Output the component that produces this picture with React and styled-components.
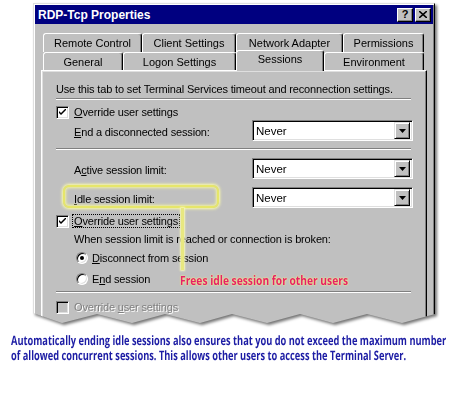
import React from 'react';
import styled, { createGlobalStyle } from 'styled-components';

const GlobalStyle = createGlobalStyle`
  body {
    margin: 0;
    background: #fff;
  }
`;

const Page = styled.div`
  position: relative;
  width: 470px;
  height: 400px;
  padding: 3px 0 0 33px;
  box-sizing: border-box;
  overflow: hidden;
  font-family: "Liberation Sans", Arial, sans-serif;
`;

// drop shadow sits on a wrapper so the clipped torn edge still casts it
const Shadow = styled.div`
  width: 402px;
  filter: drop-shadow(2px 2px 1.5px rgba(0, 0, 0, 0.55));
`;

const Dialog = styled.div`
  height: 322px;
  box-sizing: border-box;
  background: #c0c0c0;
  border: 1px solid;
  border-color: #dfdfdf #000 #000 #dfdfdf;
  box-shadow: inset 1px 1px #fff, inset -1px -1px #808080;
  padding: 1px;
  overflow: hidden;
  clip-path: polygon(
    0 0, 402px 0, 402px 311px,
    369px 320px, 334px 311px, 300px 320px, 267px 311px,
    234px 320px, 199px 311px, 167px 320px, 132px 311px,
    99px 320px, 64px 311px, 29px 320px, 0 310px
  );
`;

const TitleBar = styled.div`
  height: 19px;
  background: #000080;
  display: flex;
  align-items: center;
  justify-content: space-between;
  padding: 0 2px 0 3px;
`;

const Title = styled.span`
  color: #fff;
  font-weight: bold;
  font-size: 12px;
`;

const TitleButtons = styled.div`
  display: flex;
  gap: 2px;
`;

const TitleButton = styled.div`
  width: 16px;
  height: 14px;
  box-sizing: border-box;
  background: #c0c0c0;
  border: 1px solid;
  border-color: #fff #000 #000 #fff;
  box-shadow: inset -1px -1px #808080;
  display: flex;
  align-items: center;
  justify-content: center;
  font-weight: bold;
  font-size: 11px;
  line-height: 1;
  color: #000;
`;

const Body = styled.div`
  padding: 9px 6px 0 6px;
`;

const TabRow = styled.div`
  display: flex;
  align-items: flex-end;
  height: ${p => p.$h}px;
  margin: 0 3px 0 2px;
`;

const Tab = styled.div`
  position: relative;
  z-index: ${p => (p.$selected ? 2 : 1)};
  width: ${p => p.$w}px;
  height: ${p => (p.$selected ? p.$h + 3 : p.$h)}px;
  margin: ${p => (p.$selected ? '-2px 0 -1px 0' : '0')};
  box-sizing: border-box;
  background: #c0c0c0;
  border: 1px solid;
  border-bottom: none;
  border-color: #fff #000 transparent #fff;
  box-shadow: inset -1px 0 #808080;
  border-radius: 3px 3px 0 0;
  display: flex;
  align-items: ${p => (p.$selected ? 'flex-start' : 'center')};
  padding-top: ${p => (p.$selected ? '2px' : '0')};
  justify-content: center;
  font-size: 11px;
  color: #000;
`;

const Panel = styled.div`
  position: relative;
  height: 260px;
  box-sizing: border-box;
  border: 1px solid;
  border-color: #fff #000 #000 #fff;
  box-shadow: inset -1px -1px #808080, inset 1px 1px #dfdfdf;
  padding: 11px 15px 0 14px;
  display: flex;
  flex-direction: column;
  font-size: 11px;
  letter-spacing: -0.16px;
  color: #000;
`;

const Text = styled.div`
  height: 14px;
  line-height: 14px;
  margin-top: ${p => p.$mt || 0}px;
  padding-left: ${p => p.$indent || 0}px;
  white-space: nowrap;
`;

const Separator = styled.div`
  height: 0;
  margin-top: ${p => p.$mt || 0}px;
  border-top: 1px solid #808080;
  border-bottom: 1px solid #fff;
`;

const CheckRow = styled.label`
  display: flex;
  align-items: center;
  gap: 5px;
  height: 14px;
  margin-top: ${p => p.$mt || 0}px;
  white-space: nowrap;
  color: ${p => (p.$disabled ? '#808080' : '#000')};
  text-shadow: ${p => (p.$disabled ? '1px 1px #fff' : 'none')};
`;

const Box = styled.span`
  width: 13px;
  height: 13px;
  box-sizing: border-box;
  background: ${p => (p.$disabled ? '#c0c0c0' : '#fff')};
  border: 1px solid;
  border-color: #808080 #fff #fff #808080;
  box-shadow: inset 1px 1px #000, inset -1px -1px #dfdfdf;
  display: flex;
  align-items: center;
  justify-content: center;
`;

const Focus = styled.span`
  outline: 1px dotted #000;
  outline-offset: 0;
  padding: 0 1px;
  margin-left: -1px;
`;

const FieldRow = styled.div`
  display: grid;
  grid-template-columns: 178px 161px;
  align-items: center;
  padding-left: 18px;
  margin-top: ${p => p.$mt || 0}px;
`;

const Label = styled.span`
  padding-top: 2px;
  white-space: nowrap;
`;

const Select = styled.div`
  height: 21px;
  box-sizing: border-box;
  background: #fff;
  border: 1px solid;
  border-color: #808080 #fff #fff #808080;
  box-shadow: inset 1px 1px #000, inset -1px -1px #dfdfdf;
  padding: 2px 2px 2px 3px;
  display: flex;
  align-items: center;
  justify-content: space-between;
`;

const SelectValue = styled.span`
  font-size: 11.5px;
  letter-spacing: 0;
`;

const ArrowButton = styled.span`
  width: 16px;
  height: 17px;
  box-sizing: border-box;
  background: #c0c0c0;
  border: 1px solid;
  border-color: #dfdfdf #000 #000 #dfdfdf;
  box-shadow: inset 1px 1px #fff, inset -1px -1px #808080;
  display: flex;
  align-items: center;
  justify-content: center;
`;

const RadioRow = styled.label`
  display: flex;
  align-items: center;
  gap: 4px;
  height: 14px;
  padding-left: 20px;
  margin-top: ${p => p.$mt || 0}px;
  white-space: nowrap;
`;

const Radio = styled.span`
  width: 12px;
  height: 12px;
  box-sizing: border-box;
  border-radius: 50%;
  background: #fff;
  border: 1px solid;
  border-color: #808080 #fff #fff #808080;
  box-shadow: inset 1px 1px #000, inset -1px -1px #dfdfdf;
  display: flex;
  align-items: center;
  justify-content: center;

  &::after {
    content: '';
    width: 4px;
    height: 4px;
    border-radius: 50%;
    background: ${p => (p.$checked ? '#000' : 'transparent')};
  }
`;

const Highlight = styled.div`
  position: absolute;
  left: 63px;
  top: 185px;
  width: 156px;
  height: 23px;
  box-sizing: border-box;
  border: 2px solid #e6e66a;
  border-radius: 6px;
  box-shadow: 0 0 3px 1px #ffffa8, inset 0 0 3px 1px #f4f4a0;
`;

const Connector = styled.div`
  position: absolute;
  left: 181px;
  top: 208px;
  width: 3px;
  height: 62px;
  background: #e8e880;
  box-shadow: 0 0 2px 1px #f8f8b8;
`;

const Callout = styled.div`
  position: absolute;
  left: 180px;
  top: 272px;
  font-family: "Open Sans", "Liberation Sans", sans-serif;
  font-weight: bold;
  font-size: 12.5px;
  color: #e4206a;
  text-shadow: 0 0 2px #ffff70, 0 0 1px #ffff90;
  white-space: nowrap;
  transform: scaleX(0.82);
  transform-origin: left top;
`;

const Caption = styled.div`
  width: 620px;
  margin: 8px 0 0 -22px;
  font-family: "Open Sans", "Liberation Sans", sans-serif;
  font-weight: bold;
  font-size: 13px;
  line-height: 15px;
  color: #1c1ca4;
  white-space: nowrap;
  text-rendering: geometricPrecision;
  transform: scaleX(0.713);
  transform-origin: left top;
`;

const u = ch => <u>{ch}</u>;

function Check({ disabled, checked }) {
  return (
    <Box $disabled={disabled}>
      {checked && (
        <svg width="7" height="7" viewBox="0 0 7 7">
          <path d="M0 2 L0 4 L2 6 L7 1 L7 -1 L2 4 Z" fill="#000" />
        </svg>
      )}
    </Box>
  );
}

function Dropdown({ value }) {
  return (
    <Select>
      <SelectValue>{value}</SelectValue>
      <ArrowButton>
        <svg width="7" height="4" viewBox="0 0 7 4">
          <path d="M0 0 H7 L3.5 4 Z" fill="#000" />
        </svg>
      </ArrowButton>
    </Select>
  );
}

const topTabs = [
  { name: 'Remote Control', w: 99 },
  { name: 'Client Settings', w: 94 },
  { name: 'Network Adapter', w: 107 },
  { name: 'Permissions', w: 81 },
];

const bottomTabs = [
  { name: 'General', w: 80 },
  { name: 'Logon Settings', w: 113 },
  { name: 'Sessions', w: 88, selected: true },
  { name: 'Environment', w: 100 },
];

export default function App() {
  return (
    <>
      <GlobalStyle />
      <Page>
        <Shadow>
          <Dialog>
            <TitleBar>
              <Title>RDP-Tcp Properties</Title>
              <TitleButtons>
                <TitleButton>?</TitleButton>
                <TitleButton>
                  <svg width="8" height="7" viewBox="0 0 8 7">
                    <path d="M0 0 L8 7 M8 0 L0 7" stroke="#000" strokeWidth="1.6" />
                  </svg>
                </TitleButton>
              </TitleButtons>
            </TitleBar>
            <Body>
              <TabRow $h={19}>
                {topTabs.map(t => (
                  <Tab key={t.name} $w={t.w} $h={19}>{t.name}</Tab>
                ))}
              </TabRow>
              <TabRow $h={18}>
                {bottomTabs.map(t => (
                  <Tab key={t.name} $w={t.w} $h={18} $selected={t.selected}>{t.name}</Tab>
                ))}
              </TabRow>
              <Panel>
                <Text>Use this tab to set Terminal Services timeout and reconnection settings.</Text>
                <Separator $mt={2} />
                <CheckRow $mt={5}>
                  <Check checked />
                  <span>{u('O')}verride user settings</span>
                </CheckRow>
                <FieldRow $mt={1}>
                  <Label>{u('E')}nd a disconnected session:</Label>
                  <Dropdown value="Never" />
                </FieldRow>
                <Separator $mt={7} />
                <FieldRow $mt={8}>
                  <Label>A{u('c')}tive session limit:</Label>
                  <Dropdown value="Never" />
                </FieldRow>
                <FieldRow $mt={8}>
                  <Label>{u('I')}dle session limit:</Label>
                  <Dropdown value="Never" />
                </FieldRow>
                <CheckRow $mt={6}>
                  <Check checked />
                  <Focus>{u('O')}verride user settings</Focus>
                </CheckRow>
                <Text $mt={4} $indent={18}>When session limit is reached or connection is broken:</Text>
                <RadioRow $mt={5}>
                  <Radio $checked />
                  <span>{u('D')}isconnect from session</span>
                </RadioRow>
                <RadioRow $mt={7}>
                  <Radio />
                  <span>E{u('n')}d session</span>
                </RadioRow>
                <Separator $mt={5} />
                <CheckRow $mt={7} $disabled>
                  <Check disabled />
                  <span>Override {u('u')}ser settings</span>
                </CheckRow>
              </Panel>
            </Body>
          </Dialog>
        </Shadow>
        <Caption>
          <div>Automatically ending idle sessions also ensures that you do not exceed the maximum number</div>
          <div>of allowed concurrent sessions. This allows other users to access the Terminal Server.</div>
        </Caption>
        <Highlight />
        <Connector />
        <Callout>Frees idle session for other users</Callout>
      </Page>
    </>
  );
}
